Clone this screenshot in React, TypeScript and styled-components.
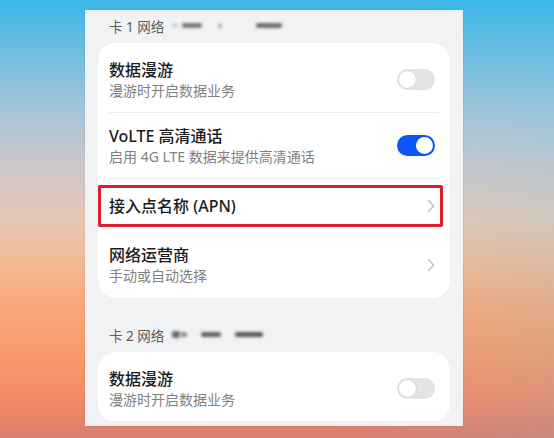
import React from "react";
import styled, { createGlobalStyle } from "styled-components";

const GlobalStyle = createGlobalStyle`
  html, body {
    margin: 0;
    padding: 0;
  }
  body {
    font-family: "Noto Sans", "Noto Sans CJK SC", sans-serif;
  }
`;

const Page = styled.div`
  width: 554px;
  height: 438px;
  overflow: hidden;
  box-sizing: border-box;
  padding: 10px 0 0 85px;
  background:
    linear-gradient(90deg, rgba(255, 255, 255, 0) 60%, rgba(60, 200, 245, 0.12) 100%),
    linear-gradient(
      180deg,
      #3ab6e8 0%,
      #6fbde0 12%,
      #a9c4d6 26%,
      #cdc6ca 38%,
      #e6c6b4 50%,
      #f3b995 60%,
      #f8a87a 70%,
      #f89a6c 80%,
      #f48a66 91%,
      #dc7e70 100%
    );
`;

const Panel = styled.div`
  width: 378px;
  height: 416px;
  overflow: hidden;
  box-sizing: border-box;
  padding: 0 13px;
  background: #f1f2f4;
  box-shadow: 0 0 2px rgba(0, 0, 0, 0.12);
`;

const SectionHeader = styled.div<{ $top: number }>`
  display: flex;
  align-items: center;
  height: 30px;
  margin-top: ${(p) => p.$top}px;
  padding: 0 11px 5px;
  box-sizing: border-box;
  font-size: 13.5px;
  color: #5c5c5c;
  gap: 4px;
`;

const Blobs = styled.div`
  display: flex;
  align-items: center;
  height: 14px;
  filter: blur(1.6px);
  margin-left: 4px;
`;

const Blob = styled.span<{ $w: number; $h: number; $ml: number; $c: string }>`
  display: inline-block;
  width: ${(p) => p.$w}px;
  height: ${(p) => p.$h}px;
  margin-left: ${(p) => p.$ml}px;
  background: ${(p) => p.$c};
  border-radius: 2px;
`;

const Card = styled.div`
  background: #ffffff;
  border-radius: 18px;
  padding: 4px 0 0;
`;

const Row = styled.div<{ $h: number }>`
  position: relative;
  display: flex;
  align-items: center;
  justify-content: space-between;
  height: ${(p) => p.$h}px;
  padding: 0 15px 0 11px;
`;

const Divider = styled.div`
  height: 1px;
  margin: 0 11px;
  background: #ebebeb;
`;

const Texts = styled.div`
  display: flex;
  flex-direction: column;
`;

const Title = styled.div`
  font-size: 16px;
  line-height: 22px;
  font-weight: 500;
  color: #1b1b1b;
`;

const Sub = styled.div`
  font-size: 14px;
  line-height: 20px;
  color: #818181;
`;

const Track = styled.div<{ $on: boolean }>`
  position: relative;
  width: 38px;
  height: 21px;
  border-radius: 11px;
  background: ${(p) => (p.$on ? "#0a59f7" : "#e4e4e4")};
`;

const Knob = styled.div<{ $on: boolean }>`
  position: absolute;
  top: 2px;
  left: ${(p) => (p.$on ? "19px" : "2px")};
  width: 17px;
  height: 17px;
  border-radius: 50%;
  background: #ffffff;
  box-shadow: 0 0 2px rgba(0, 0, 0, 0.15);
`;

const Highlight = styled.div`
  position: absolute;
  left: 0;
  right: 7px;
  top: 6px;
  bottom: 5px;
  border: 3.5px solid #dc1f2b;
  border-radius: 2px;
`;

const Toggle = ({ on }: { on: boolean }) => (
  <Track $on={on}>
    <Knob $on={on} />
  </Track>
);

const Chevron = () => (
  <svg width="8" height="14" viewBox="0 0 8 14">
    <path d="M1.5 1.5 L6.5 7 L1.5 12.5" fill="none" stroke="#c2c2c2" strokeWidth="1.5" strokeLinecap="round" strokeLinejoin="round" />
  </svg>
);

export default function App() {
  return (
    <>
      <GlobalStyle />
      <Page>
        <Panel>
          <SectionHeader $top={3}>
            <span>卡 1 网络</span>
            <Blobs>
              <Blob $w={6} $h={3} $ml={0} $c="#c8c8c8" />
              <Blob $w={20} $h={5} $ml={4} $c="#7a7a7a" />
              <Blob $w={4} $h={4} $ml={16} $c="#9a9a9a" />
              <Blob $w={26} $h={5} $ml={34} $c="#6e6e6e" />
            </Blobs>
          </SectionHeader>
          <Card>
            <Row $h={65}>
              <Texts>
                <Title>数据漫游</Title>
                <Sub>漫游时开启数据业务</Sub>
              </Texts>
              <Toggle on={false} />
            </Row>
            <Divider />
            <Row $h={65}>
              <Texts>
                <Title>VoLTE 高清通话</Title>
                <Sub>启用 4G LTE 数据来提供高清通话</Sub>
              </Texts>
              <Toggle on={true} />
            </Row>
            <Divider />
            <Row $h={53}>
              <Title>接入点名称 (APN)</Title>
              <Chevron />
              <Highlight />
            </Row>
            <Row $h={66}>
              <Texts>
                <Title>网络运营商</Title>
                <Sub>手动或自动选择</Sub>
              </Texts>
              <Chevron />
            </Row>
          </Card>
          <SectionHeader $top={24}>
            <span>卡 2 网络</span>
            <Blobs>
              <Blob $w={8} $h={7} $ml={0} $c="#6a6a6a" />
              <Blob $w={6} $h={5} $ml={1} $c="#8a8a8a" />
              <Blob $w={20} $h={5} $ml={14} $c="#626262" />
              <Blob $w={28} $h={5} $ml={14} $c="#5a5a5a" />
            </Blobs>
          </SectionHeader>
          <Card>
            <Row $h={65}>
              <Texts>
                <Title>数据漫游</Title>
                <Sub>漫游时开启数据业务</Sub>
              </Texts>
              <Toggle on={false} />
            </Row>
            <Divider />
          </Card>
        </Panel>
      </Page>
    </>
  );
}
